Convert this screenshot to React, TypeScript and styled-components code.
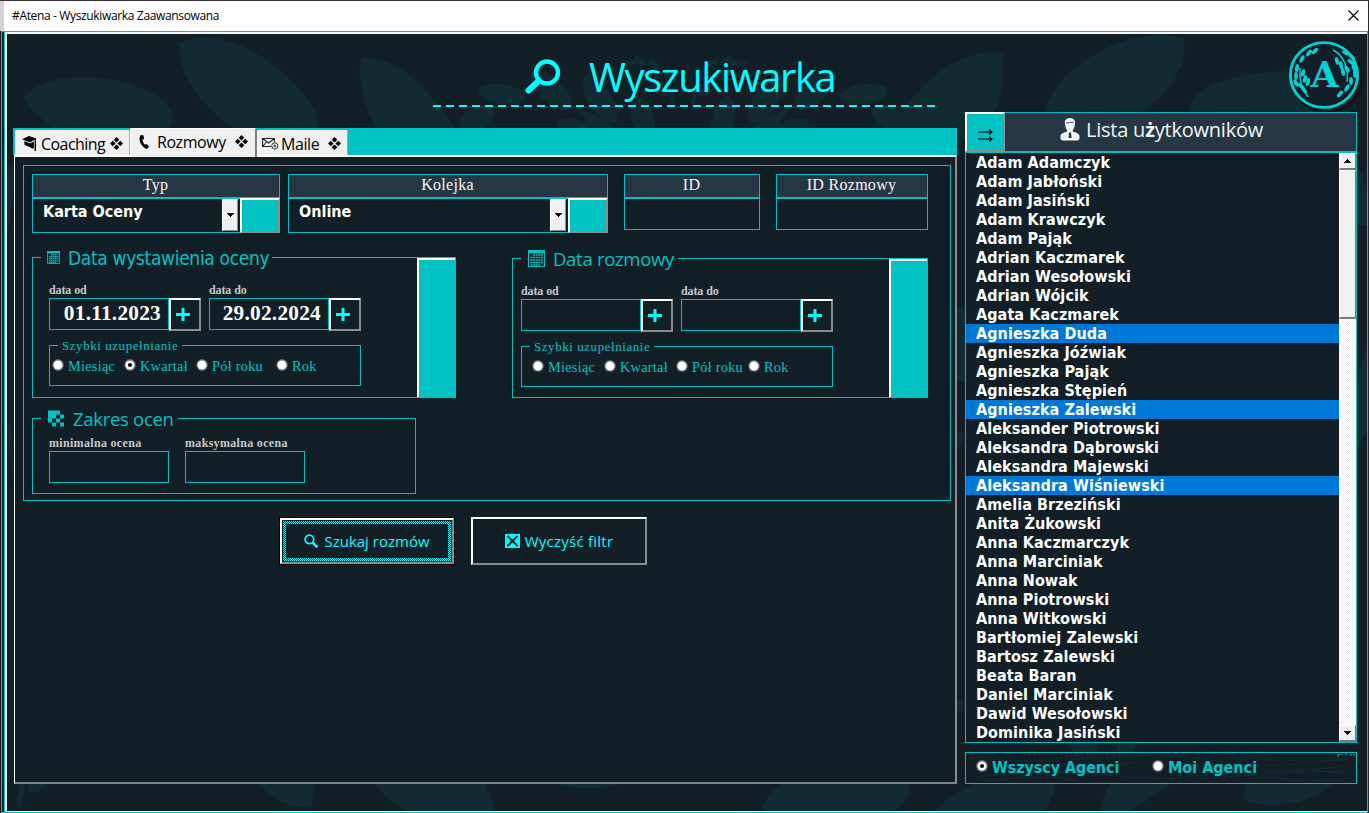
import React from "react";
import styled, { createGlobalStyle, css } from "styled-components";

const C = {
  bg: "#121f27",
  leaf: "#122a31",
  teal: "#00c2c2",
  cyan: "#00ffff",
  head: "#263643",
  face: "#f0f0f0",
  blue: "#0078d7",
};
const UI = `"Open Sans", "Noto Sans", sans-serif`;
const BOLD = `"DejaVu Sans Condensed", "DejaVu Sans", sans-serif`;
const SERIF = `"Liberation Serif", serif`;

const Global = createGlobalStyle`
  *, *::before, *::after { box-sizing: border-box; }
  html, body { margin: 0; padding: 0; background: ${C.bg}; }
  body { width: 1369px; height: 813px; overflow: hidden; }
  svg { flex: none; }
`;

const raised = css`
  border: 2px solid;
  border-color: #fff #8c8c8c #8c8c8c #fff;
`;

const Label = styled.span<{ $size: number; $ls?: number; $font?: string; $w?: number; $color?: string }>`
  font-family: ${(p) => p.$font || UI};
  font-size: ${(p) => p.$size}px;
  font-weight: ${(p) => p.$w || 400};
  font-stretch: ${(p) => (p.$font === BOLD ? "condensed" : "normal")};
  letter-spacing: ${(p) => p.$ls || 0}px;
  color: ${(p) => p.$color || "inherit"};
  line-height: 1;
  white-space: pre;
`;

/* ---------- window ---------- */
const Window = styled.div`
  width: 1369px;
  height: 813px;
  display: flex;
  flex-direction: column;
  border-top: 1px solid #3a3639;
  border-right: 1px solid #2c2a2c;
  overflow: hidden;
`;
const TitleBar = styled.header`
  height: 30px;
  flex: none;
  display: flex;
  align-items: center;
  justify-content: space-between;
  padding: 0 9px 1px 8px;
  background: #fff;
  border-left: 4px solid #d4d1d3;
  color: #000;
`;
const Frame = styled.div`
  flex: 1;
  display: flex;
  padding-left: 2px;
  background: ${C.bg};
  border: 1px solid ${C.teal};
  margin-left: 1px;
`;
const Client = styled.main`
  position: relative;
  flex: 1;
  display: flex;
  gap: 8px;
  border-left: 1px solid ${C.teal};
  overflow: hidden;
  &::after {
    content: "";
    position: absolute;
    inset: 0;
    border: 2px solid #f4f6f6;
    border-right: 0;
    border-bottom-width: 1px;
    pointer-events: none;
  }
`;
const Backdrop = styled.svg`
  position: absolute;
  left: -5px;
  top: -32px;
`;
const Left = styled.section`
  position: relative;
  width: 944px;
  margin-left: 8px;
  display: flex;
  flex-direction: column;
`;
const Hero = styled.div`
  height: 96px;
  padding: 0 21px 0 420px;
`;
const HeroRow = styled.div`
  height: 73px;
  display: flex;
  align-items: flex-end;
  color: ${C.cyan};
  padding: 0 0 8px 91px;
  gap: 28px;
`;
const HeroIcon = styled.svg`
  margin-bottom: 1px;
`;
const Dashes = styled.div`
  height: 2px;
  background: repeating-linear-gradient(90deg, ${C.cyan} 0 8px, transparent 8px 13px);
`;

/* ---------- tabs ---------- */
const Tabs = styled.nav`
  height: 27px;
  display: flex;
  align-items: flex-end;
  background: ${C.teal};
  padding-left: 2px;
`;
const Tab = styled.div<{ $w: number; $active?: boolean }>`
  width: ${(p) => p.$w}px;
  height: ${(p) => (p.$active ? 29 : 25)}px;
  margin-bottom: ${(p) => (p.$active ? -2 : 0)}px;
  position: relative;
  z-index: ${(p) => (p.$active ? 2 : 1)};
  display: flex;
  align-items: center;
  padding: ${(p) => (p.$active ? "0 7px 3px 8px" : "1px 6px 0 6px")};
  background: ${C.face};
  border-top: 1px solid #fff;
  border-left: 1px solid #fff;
  border-right: ${(p) => (p.$active ? "2px solid #7d7d7d" : "1px solid #a8a8a8")};
  color: #000;
  border-radius: 2px 2px 0 0;
`;
const TabText = styled.span`
  flex: 1;
  display: flex;
`;
const TabIcon = styled.span<{ $w: number; $ml?: number }>`
  width: ${(p) => p.$w}px;
  margin-left: ${(p) => p.$ml || 0}px;
  flex: none;
  display: flex;
`;
const Pane = styled.div`
  margin-left: 1px;
  height: 629px;
  background: ${C.bg};
  ${raised}
  border-left-width: 1px;
  border-bottom-color: #858585;
  padding: 8px 5px 0 8px;
`;
const FilterFrame = styled.div`
  height: 336px;
  width: 928px;
  border: 1px solid ${C.teal};
  padding: 8px 0 0 8px;
`;
const Row = styled.div<{ $gap?: number; $mt?: number }>`
  display: flex;
  align-items: flex-start;
  gap: ${(p) => p.$gap || 0}px;
  margin-top: ${(p) => p.$mt || 0}px;
`;
const Col = styled.div<{ $w: number; $mr?: number }>`
  width: ${(p) => p.$w}px;
  margin-right: ${(p) => p.$mr || 0}px;
  flex: none;
`;
const ColHead = styled.div`
  height: 24px;
  background: ${C.head};
  border: 1px solid ${C.teal};
  color: #f4f7f8;
  display: flex;
  justify-content: center;
  padding: 2px 1px 0 0;
`;
const ColBody = styled.div<{ $h: number }>`
  height: ${(p) => p.$h}px;
  border: 1px solid ${C.teal};
  display: flex;
  color: #fff;
`;
const ComboText = styled.div`
  flex: 1;
  display: flex;
  padding: 5px 0 0 10px;
`;
const ArrowButton = styled.div`
  width: 16px;
  height: 32px;
  flex: none;
  background: ${C.face};
  border: 1px solid #fff;
  border-right-color: #8a8a8a;
  border-bottom-color: #8a8a8a;
  display: flex;
  align-items: center;
  justify-content: center;
`;
const TealButton = styled.div`
  width: 40px;
  height: 35px;
  margin: -1px -1px 0 2px;
  flex: none;
  background: ${C.teal};
  ${raised}
`;

/* ---------- group boxes ---------- */
const Group = styled.fieldset<{ $w: number; $h: number }>`
  margin: 0;
  padding: 0;
  min-width: 0;
  width: ${(p) => p.$w}px;
  height: ${(p) => p.$h}px;
  border: 1px solid ${C.teal};
  color: ${C.teal};
  flex: none;
`;
const Legend = styled.legend<{ $w: number }>`
  height: 1px;
  width: ${(p) => p.$w}px;
  margin-left: 8px;
  padding: 0;
`;
const LegendInner = styled.span<{ $pl: number; $gap: number; $pt?: number }>`
  height: 1px;
  display: flex;
  align-items: center;
  padding-left: ${(p) => p.$pl}px;
  gap: ${(p) => p.$gap}px;
  & > span {
    padding-top: ${(p) => p.$pt || 0}px;
  }
`;
const GroupBody = styled.div<{ $h: number }>`
  height: ${(p) => p.$h}px;
  display: flex;
  justify-content: space-between;
`;
const GroupMain = styled.div<{ $pl: number; $pt: number }>`
  padding: ${(p) => p.$pt}px 0 0 ${(p) => p.$pl}px;
`;
const SideButton = styled.div`
  width: 38px;
  background: ${C.teal};
  border-left: 2px solid #fff;
  border-top: 2px solid #fff;
`;
const FieldLabel = styled.div`
  height: 14px;
  color: #c8c8c8;
  display: flex;
`;
const Input = styled.div`
  width: 120px;
  height: 32px;
  border: 1px solid ${C.teal};
  color: #fff;
  display: flex;
  align-items: center;
  justify-content: flex-end;
  padding: 0 7px 1px 0;
`;
const PlusButton = styled.div`
  width: 32px;
  height: 33px;
  ${raised}
  display: flex;
  align-items: center;
  padding-left: 5px;
`;
const RadioRow = styled.div<{ $pl: number }>`
  display: flex;
  padding: 13px 0 0 ${(p) => p.$pl}px;
`;
const RadioItem = styled.div<{ $w: number }>`
  width: ${(p) => p.$w}px;
  display: flex;
  align-items: flex-start;
  gap: 4px;
`;

/* ---------- actions ---------- */
const Actions = styled.div`
  display: flex;
  gap: 16px;
  margin: 16px 0 0 256px;
`;
const ActionButton = styled.button<{ $focus?: boolean }>`
  width: 176px;
  height: 48px;
  padding: 0;
  background: ${C.bg};
  color: ${C.cyan};
  ${raised}
  ${(p) =>
    p.$focus &&
    css`
      width: 174px;
      height: 46px;
      margin: 1px;
      box-shadow: 0 0 0 1px #000;
    `}
`;
const ActionInner = styled.span<{ $focus?: boolean }>`
  display: flex;
  align-items: center;
  justify-content: center;
  gap: 5px;
  height: 100%;
  ${(p) =>
    p.$focus &&
    css`
      height: 40px;
      margin: 1px;
      padding: 3px;
      background:
        linear-gradient(${C.bg}, ${C.bg}) content-box,
        repeating-conic-gradient(${C.bg} 0 25%, ${C.cyan} 0 50%) 0 0 / 2px 2px;
    `}
`;

/* ---------- user list ---------- */
const Right = styled.aside`
  position: relative;
  width: 392px;
  margin-top: 80px;
  display: flex;
  flex-direction: column;
`;
const ListHead = styled.div`
  position: relative;
  height: 40px;
  display: flex;
  background: ${C.head};
  border: 1px solid ${C.teal};
  color: #f2f6f8;
`;
const MoveButton = styled.div`
  width: 40px;
  height: 40px;
  margin: -1px 0 0 -1px;
  background: ${C.teal};
  ${raised}
  display: flex;
  align-items: center;
  justify-content: center;
  padding-top: 6px;
`;
const ListTitle = styled.div`
  flex: 1;
  display: flex;
  justify-content: center;
  gap: 6px;
  padding: 5px 38px 0 0;
  & > span { padding-top: 2px; }
`;
const ListBox = styled.div`
  height: 591px;
  display: flex;
  background: ${C.bg};
  border: 1px solid ${C.teal};
`;
const Items = styled.div`
  flex: 1;
  overflow: hidden;
`;
const Item = styled.div<{ $on?: boolean }>`
  height: 19px;
  padding: 2px 0 0 10px;
  display: flex;
  color: #fff;
  background: ${(p) => (p.$on ? C.blue : "transparent")};
`;
const Scroll = styled.div`
  width: 17px;
  display: flex;
  flex-direction: column;
  background: repeating-conic-gradient(#fff 0 25%, #eeeeee 0 50%) 0 0 / 2px 2px;
`;
const ScrollPart = styled.div<{ $h: number }>`
  height: ${(p) => p.$h}px;
  background: ${C.face};
  border: 1px solid #fff;
  border-right: 1px solid #777;
  border-bottom: 2px solid #777;
  display: flex;
  align-items: center;
  justify-content: center;
`;
const Spacer = styled.div`
  flex: 1;
`;
const Scope = styled.div`
  position: relative;
  height: 32px;
  margin-top: 9px;
  border: 1px solid ${C.teal};
  background: ${C.bg};
  color: ${C.teal};
`;
const ScopeGrain = styled.svg`
  position: absolute;
  inset: 0;
`;
const ScopeRow = styled.div`
  position: relative;
  display: flex;
  padding: 7px 0 0 10px;
`;
const Logo = styled.svg`
  position: absolute;
  left: 320px;
  top: -76px;
`;

/* ---------- drawings ---------- */
const LeafArt = () => (
  <Backdrop width="1369" height="813" viewBox="0 0 1369 813" fill={C.leaf}>
    <path d="M24 97C50 70 110 72 150 92C175 105 177 118 168 130H60C40 120 28 108 24 97Z" />
    <path d="M179 43C215 27 265 50 300 90C316 110 320 120 318 130H235C200 105 178 75 179 43Z" />
    <path d="M361 58C395 55 430 88 455 130H378C362 105 357 80 361 58Z" />
    <path d="M1002 53C960 47 920 80 890 130H985C1000 105 1007 80 1002 53Z" />
    <path d="M1184 38C1140 22 1055 62 1044 114H1138C1170 95 1188 65 1184 38Z" />
    <path d="M1190 114C1186 88 1230 72 1290 71C1330 72 1338 88 1338 96L1330 114Z" />
    {["", "translate(1366 0) scale(-1 1)"].map((t) => (
      <g key={t} transform={t}>
        <ellipse cx="502" cy="94" rx="24" ry="10" transform="rotate(8 502 94)" />
        <ellipse cx="477" cy="118" rx="19" ry="11" transform="rotate(-30 477 118)" />
        <ellipse cx="551" cy="90" rx="26" ry="12" transform="rotate(42 551 90)" />
        <ellipse cx="600" cy="99" rx="28" ry="12" transform="rotate(58 600 99)" />
        <ellipse cx="643" cy="119" rx="23" ry="11" transform="rotate(75 643 119)" />
        <path d="M575 107C590 112 605 120 616 130H592C587 122 580 114 575 107Z" />
        <path d="M556 119C575 117 588 122 598 130H560Z" />
        <ellipse cx="628" cy="63" rx="9" ry="3" />
        <ellipse cx="640" cy="61" rx="7" ry="3.5" transform="rotate(35 640 61)" />
        <ellipse cx="654" cy="64" rx="7" ry="3.5" transform="rotate(50 654 64)" />
        <ellipse cx="647" cy="77" rx="10" ry="4" transform="rotate(15 647 77)" />
        <ellipse cx="659" cy="90" rx="10" ry="4" transform="rotate(30 659 90)" />
        <path d="M660 66C668 78 673 90 675 104L671 104C669 91 666 80 660 66Z" />
      </g>
    ))}
    <ellipse cx="962" cy="345" rx="30" ry="37" />
    <path d="M955 431L963 433C963 441 960 449 955 455Z" />
    <path d="M940 160C955 145 975 140 975 120V110H957V150Z" />
    <path d="M1355 164C1362 170 1368 185 1368 205V225H1355Z" />
    <path d="M1368 340C1362 365 1356 375 1356 400V450L1368 430Z" />
    <path d="M7 168L14 166V190L7 235Z" />
    <path d="M7 430L11 420L14 490Z" />
    <path d="M257 782C270 797 290 810 311 807C315 795 314 788 314 782Z" />
    <path d="M374 782C385 797 395 805 410 812H494C493 800 489 790 485 782Z" />
    <path d="M553 782C575 791 605 790 625 782Z" />
    <path d="M783 782C770 792 765 800 762 808L765 812H893C906 803 911 793 910 782Z" />
    <path d="M28 788C28 794 35 793 40 790C46 786 48 784 50 782H29Z" />
    <path d="M20 782C18 792 16 802 17 806C19 810 22 808 22 803L26 782Z" />
    <path d="M933 812C945 800 958 792 975 783H1056C1055 795 1050 802 1043 812Z" />
    <path d="M1100 812C1102 800 1106 792 1110 783H1173C1160 792 1145 800 1130 812Z" />
    <path d="M1247 783C1243 793 1243 798 1247 802C1280 810 1310 803 1334 783Z" />
    <path d="M1062 740H1095L1100 754H1078C1072 750 1066 745 1062 740ZM1115 740H1140L1132 754H1118Z" />
    <circle cx="957" cy="706" r="7" />
  </Backdrop>
);

/* x, y, rotation of each laurel leaf */
const leaves: number[][] = [
  [26, 11, -45], [20, 13, -50], [13, 19, -65], [8, 28, -80], [7, 36, 90], [7, 43, 60],
  [14, 33, -70], [16, 39, -75], [19, 42, -75], [12, 46, 40], [15, 50, 55],
  [57, 13, 25], [63, 17, 40], [62, 22, 40], [65, 28, 70], [58, 29, 60], [48, 21, 75],
  [52, 25, 80], [54, 32, 80], [66, 34, 85], [62, 41, 90], [58, 48, -60], [51, 54, -50],
];
const LogoArt = () => (
  <Logo width="80" height="80" viewBox="0 0 80 80">
    <ellipse cx="42" cy="42" rx="35" ry="34" fill="none" stroke="#0c151b" strokeWidth="3" opacity="0.8" />
    <ellipse cx="39" cy="39" rx="33.6" ry="32.4" fill="#131f28" stroke="#00d2d4" strokeWidth="2.8" />
    <g transform="translate(4 4)" fill="#00d2d4">
      {leaves.map(([x, y, r], i) => (
        <ellipse key={i} cx={x} cy={y} rx="4" ry="1.9" transform={`rotate(${r} ${x} ${y})`} />
      ))}
      <g fill="none" stroke="#00d2d4" strokeWidth="1.4">
        <path d="M19 57C13 50 10 40 11 28" />
        <path d="M44 10C54 15 60 27 58 42" />
      </g>
      <text x="35.6" y="47.4" textAnchor="middle" fontFamily="DejaVu Serif, serif" fontWeight="700" fontSize="36">A</text>
    </g>
  </Logo>
);

const Diamonds = () => (
  <svg width="13" height="13" viewBox="0 0 13 13">
    <path d="M6.5 0L9.3 2.8L6.5 5.6L3.7 2.8ZM6.5 7.4L9.3 10.2L6.5 13L3.7 10.2ZM2.8 3.7L5.6 6.5L2.8 9.3L0 6.5ZM10.2 3.7L13 6.5L10.2 9.3L7.4 6.5Z" />
  </svg>
);
const Triangle = ({ up }: { up?: boolean }) => (
  <svg width="7" height="4" viewBox="0 0 7 4" shapeRendering="crispEdges">
    <path d={up ? "M3 0H4V1H5V2H6V3H7V4H0V3H1V2H2V1H3Z" : "M0 0H7V1H6V2H5V3H4V4H3V3H2V2H1V1H0Z"} />
  </svg>
);
const Radio = ({ on }: { on?: boolean }) => (
  <svg width="12" height="12" viewBox="0 0 12 12">
    <circle cx="6" cy="6" r="5.9" fill="#666" />
    <circle cx="6" cy="6" r="4.5" fill="#fff" />
    {on && <circle cx="6" cy="6" r="2.1" fill="#000" />}
  </svg>
);
const Calendar = ({ big }: { big?: boolean }) => (
  <svg width={big ? 17 : 13} height={big ? 17 : 13} viewBox="0 0 17 17">
    <path d="M.5 .5H16.5V16.5H.5Z" fill="none" stroke={C.teal} strokeWidth="1.2" />
    <path d="M0 0H17V3.2H0Z" fill={C.teal} />
    <path d="M5 5H15M2.5 7.5H15M2.5 10H15M2.5 12.5H15M2.5 15H12" stroke={C.teal} strokeWidth="1.7" strokeDasharray="2 .6" />
  </svg>
);
const Plus = () => (
  <svg width="14" height="14" viewBox="0 0 14 14">
    <path d="M7 0V13M0 6.5H14" stroke={C.cyan} strokeWidth="3" />
  </svg>
);

/* ---------- data ---------- */
const users = [
  "Adam Adamczyk", "Adam Jabłoński", "Adam Jasiński", "Adam Krawczyk", "Adam Pająk",
  "Adrian Kaczmarek", "Adrian Wesołowski", "Adrian Wójcik", "Agata Kaczmarek", "Agnieszka Duda",
  "Agnieszka Jóźwiak", "Agnieszka Pająk", "Agnieszka Stępień", "Agnieszka Zalewski",
  "Aleksander Piotrowski", "Aleksandra Dąbrowski", "Aleksandra Majewski", "Aleksandra Wiśniewski",
  "Amelia Brzeziński", "Anita Żukowski", "Anna Kaczmarczyk", "Anna Marciniak", "Anna Nowak",
  "Anna Piotrowski", "Anna Witkowski", "Bartłomiej Zalewski", "Bartosz Zalewski", "Beata Baran",
  "Daniel Marciniak", "Dawid Wesołowski", "Dominika Jasiński",
];
const selected = new Set(["Agnieszka Duda", "Agnieszka Zalewski", "Aleksandra Wiśniewski"]);

/* ---------- composed parts ---------- */
const Heading = ({ children }: { children: string }) => (
  <ColHead><Label $font={SERIF} $size={16} $ls={0.3}>{children}</Label></ColHead>
);
const Combo = ({ title, value, w, mr }: { title: string; value: string; w: number; mr: number }) => (
  <Col $w={w} $mr={mr}>
    <Heading>{title}</Heading>
    <ColBody $h={35}>
      <ComboText><Label $font={BOLD} $w={700} $size={16}>{value}</Label></ComboText>
      <ArrowButton><Triangle /></ArrowButton>
      <TealButton />
    </ColBody>
  </Col>
);
const DateField = ({ label, value }: { label: string; value?: string }) => (
  <div>
    <FieldLabel><Label $font={SERIF} $w={700} $size={12} $ls={-0.1}>{label}</Label></FieldLabel>
    <Row>
      <Input>{value && <Label $font={SERIF} $w={700} $size={21.3} $ls={0.25}>{value}</Label>}</Input>
      <PlusButton><Plus /></PlusButton>
    </Row>
  </div>
);
const QuickFill = ({ active, widths, pl }: { active?: number; widths: number[]; pl: number }) => (
  <Row $mt={14}>
    <Group $w={312} $h={41}>
      <Legend $w={124}>
        <LegendInner $pl={4} $gap={0}><Label $font={SERIF} $size={13} $ls={0.55}>Szybki uzupełnianie</Label></LegendInner>
      </Legend>
      <RadioRow $pl={pl}>
        {["Miesiąc", "Kwartał", "Pół roku", "Rok"].map((t, i) => (
          <RadioItem key={t} $w={widths[i]}>
            <Radio on={active === i} />
            <Label $font={SERIF} $size={14.3} $ls={0.27}>{t}</Label>
          </RadioItem>
        ))}
      </RadioRow>
    </Group>
  </Row>
);

export default function App() {
  return (
    <>
      <Global />
      <Window>
        <TitleBar>
          <Label $size={12} $ls={-0.35}>#Atena - Wyszukiwarka Zaawansowana</Label>
          <svg width="11" height="11" viewBox="0 0 11 11"><path d="M.5 .5L10.5 10.5M10.5 .5L.5 10.5" stroke="#000" strokeWidth="1.1" /></svg>
        </TitleBar>
        <Frame>
          <Client>
            <LeafArt />
            <Left>
              <Hero>
                <HeroRow>
                  <HeroIcon width="37" height="38" viewBox="0 0 37 38">
                    <circle cx="23" cy="14.5" r="11" fill="none" stroke={C.cyan} strokeWidth="4.4" />
                    <path d="M14.5 23L4.5 32.5" stroke={C.cyan} strokeWidth="6" strokeLinecap="round" />
                  </HeroIcon>
                  <Label $size={40} $ls={-1.4}>Wyszukiwarka</Label>
                </HeroRow>
                <Dashes />
              </Hero>
              <Tabs>
                <Tab $w={115}>
                  <TabIcon $w={19}>
                    <svg width="15" height="16" viewBox="0 0 15 16">
                      <path d="M0 3.2L7 0L14.5 2.6L8 6.4Z" />
                      <path d="M2.4 5L8 7.6L11.8 5.6V12.6C9.5 12.8 8.6 10.6 6.4 10.4C4.6 10.2 3.6 9.6 2.4 8.6Z" />
                      <path d="M13.3 3V15" stroke="#000" strokeWidth="1.4" />
                    </svg>
                  </TabIcon>
                  <TabText><Label $size={16} $ls={-0.55}>Coaching</Label></TabText>
                  <Diamonds />
                </Tab>
                <Tab $w={127} $active>
                  <TabIcon $w={18}>
                    <svg width="10" height="14" viewBox="0 0 10 14">
                      <path d="M1.6 0L4.6 0.4L5 4L3.4 4.8C3.8 7 4.6 8.4 6 9.8L7.6 9L10 11.8L8 14C3 13 -1.6 5 1.6 0Z" />
                    </svg>
                  </TabIcon>
                  <TabText><Label $size={16} $ls={-0.45}>Rozmowy</Label></TabText>
                  <Diamonds />
                </Tab>
                <Tab $w={91}>
                  <TabIcon $w={19} $ml={-2}>
                    <svg width="17" height="13" viewBox="0 0 17 13" fill="none" stroke="#222" strokeWidth="1.1">
                      <path d="M9 9.5H.6V1.5H12.4V5.2M.6 1.5L6.5 6L12.4 1.5M.6 9.5L4.5 5" />
                      <circle cx="12.8" cy="8.9" r="3.1" strokeWidth=".9" />
                      <circle cx="12.8" cy="8.9" r="1" strokeWidth=".9" />
                    </svg>
                  </TabIcon>
                  <TabText><Label $size={16} $ls={-0.4}>Maile</Label></TabText>
                  <Diamonds />
                </Tab>
              </Tabs>
              <Pane>
                <FilterFrame>
                  <Row>
                    <Combo title="Typ" value="Karta Oceny" w={248} mr={8} />
                    <Combo title="Kolejka" value="Online" w={320} mr={16} />
                    <Col $w={136} $mr={16}><Heading>ID</Heading><ColBody $h={32} /></Col>
                    <Col $w={152}><Heading>ID Rozmowy</Heading><ColBody $h={32} /></Col>
                  </Row>
                  <Row $mt={24} $gap={56}>
                    <Group $w={424} $h={141}>
                      <Legend $w={231}>
                        <LegendInner $pl={6} $gap={8} $pt={2}>
                          <Calendar />
                          <Label $size={19} $font={BOLD} $ls={-0.33}>Data wystawienia oceny</Label>
                        </LegendInner>
                      </Legend>
                      <GroupBody $h={139}>
                        <GroupMain $pl={16} $pt={26}>
                          <Row $gap={8}>
                            <DateField label="data od" value="01.11.2023" />
                            <DateField label="data do" value="29.02.2024" />
                          </Row>
                          <QuickFill active={1} widths={[72, 72, 80, 60]} pl={2} />
                        </GroupMain>
                        <SideButton />
                      </GroupBody>
                    </Group>
                    <Row $mt={1}>
                      <Group $w={416} $h={140}>
                        <Legend $w={157}>
                          <LegendInner $pl={7} $gap={8} $pt={2}>
                            <Calendar big />
                            <Label $size={18.5} $ls={-0.3}>Data rozmowy</Label>
                          </LegendInner>
                        </Legend>
                        <GroupBody $h={138}>
                          <GroupMain $pl={8} $pt={26}>
                            <Row $gap={8}>
                              <DateField label="data od" />
                              <DateField label="data do" />
                            </Row>
                            <QuickFill widths={[72, 72, 72, 60]} pl={10} />
                          </GroupMain>
                          <SideButton />
                        </GroupBody>
                      </Group>
                    </Row>
                  </Row>
                  <Row $mt={20}>
                    <Group $w={384} $h={76}>
                      <Legend $w={137}>
                        <LegendInner $pl={7} $gap={8} $pt={2}>
                          <svg width="17" height="17" viewBox="0 -.5 17 17" fill={C.teal}>
                            <path d="M0 0H12V4H8V8H4V12H0ZM12 4H16V8H12ZM8 8H12V12H8ZM4 12H8V16H4ZM12 12H16V16H12Z" />
                          </svg>
                          <Label $size={18.5} $ls={-0.3}>Zakres ocen</Label>
                        </LegendInner>
                      </Legend>
                      <GroupMain $pl={16} $pt={18}>
                        <Row $gap={16}>
                          {["minimalna ocena", "maksymalna ocena"].map((t) => (
                            <div key={t}>
                              <FieldLabel><Label $font={SERIF} $w={700} $size={12} $ls={0.32}>{t}</Label></FieldLabel>
                              <Input />
                            </div>
                          ))}
                        </Row>
                      </GroupMain>
                    </Group>
                  </Row>
                </FilterFrame>
                <Actions>
                  <ActionButton $focus>
                    <ActionInner $focus>
                      <svg width="15" height="15" viewBox="0 0 15 15" fill="none" stroke={C.cyan}>
                        <circle cx="5.4" cy="5.4" r="4.3" strokeWidth="1.7" />
                        <path d="M8.6 8.6L13.5 13.2" strokeWidth="2.6" />
                      </svg>
                      <Label $size={15}>Szukaj rozmów</Label>
                    </ActionInner>
                  </ActionButton>
                  <ActionButton>
                    <ActionInner>
                      <svg width="15" height="14" viewBox="0 0 15 14">
                        <path d="M0 0H15V14H0Z" fill={C.cyan} />
                        <path d="M2.5 2L12.5 12M12.5 2L2.5 12" stroke={C.bg} strokeWidth="2" />
                      </svg>
                      <Label $size={15} $ls={0.25}>Wyczyść filtr</Label>
                    </ActionInner>
                  </ActionButton>
                </Actions>
              </Pane>
            </Left>
            <Right>
              <LogoArt />
              <ListHead>
                <MoveButton>
                  <svg width="15" height="13" viewBox="0 0 15 13" fill="none" stroke="#000" strokeWidth="1.1">
                    <path d="M0 3H14M11 .5L14 3L11 5.5M0 10H14M11 7.5L14 10L11 12.5" />
                  </svg>
                </MoveButton>
                <ListTitle>
                  <svg width="20" height="23" viewBox="0 0 20 23" fill="#f2f6f8">
                    <path d="M5 6C4 2 7 0 10 0C14 0 16 3 14.8 7C14.5 10 13 12 12.5 13C14 14.5 19 14.5 19.5 18C19.8 21 19 22.5 17 22.5H3C1 22.5 .2 21 .5 18C1 14.5 6 14.5 7.5 13C6 11 5.4 9 5 6Z" />
                    <path d="M9 14.5H11L11.6 20H8.6Z" fill={C.head} />
                    <path d="M6 5C8 5.5 11 3.5 13.5 4.5" fill="none" stroke={C.head} strokeWidth=".9" />
                  </svg>
                  <Label $size={20} $ls={-0.22}>Lista u<b>ż</b>ytkowników</Label>
                </ListTitle>
              </ListHead>
              <ListBox>
                <Items>
                  {users.map((u) => (
                    <Item key={u} $on={selected.has(u)}>
                      <Label $font={BOLD} $w={700} $size={16} $ls={0.08}>{u}</Label>
                    </Item>
                  ))}
                </Items>
                <Scroll>
                  <ScrollPart $h={17}><Triangle up /></ScrollPart>
                  <ScrollPart $h={149} />
                  <Spacer />
                  <ScrollPart $h={17}><Triangle /></ScrollPart>
                </Scroll>
              </ListBox>
              <Scope>
                <ScopeGrain width="390" height="30" viewBox="0 0 390 30" fill="none">
                  <g stroke="#122c33" strokeWidth="1">
                    <path d="M4 4Q60 12 130 5T250 8T388 4M10 24Q70 15 140 22T260 24T386 18M30 18Q80 22 120 17M150 12Q200 4 250 14T384 12M200 26Q250 18 300 24T380 26M270 4Q320 10 380 7M300 18Q340 14 385 22M20 28Q70 22 110 27" strokeDasharray="26 4 12 6" />
                  </g>
                  <path d="M372 1.5H376M379 .8H382M384 2H389M371 3H373" stroke={C.teal} strokeDasharray="2 1" />
                </ScopeGrain>
                <ScopeRow>
                  <RadioItem $w={176}><Radio on /><Label $font={BOLD} $w={700} $size={16} $ls={-0.1}>Wszyscy Agenci</Label></RadioItem>
                  <RadioItem $w={120}><Radio /><Label $font={BOLD} $w={700} $size={16}>Moi Agenci</Label></RadioItem>
                </ScopeRow>
              </Scope>
            </Right>
          </Client>
        </Frame>
      </Window>
    </>
  );
}
